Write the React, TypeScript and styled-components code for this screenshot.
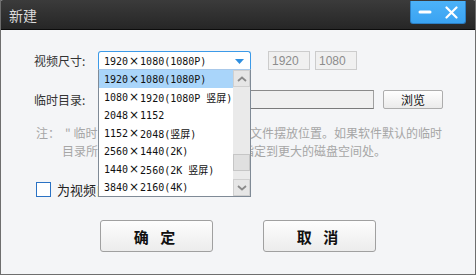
import React from 'react'
import styled, {createGlobalStyle} from 'styled-components'

const GlobalStyle = createGlobalStyle`
  html, body {
    margin: 0;
    padding: 0;
    background: #ffffff;
  }
  body {
    font-family: "Noto Sans CJK SC", "Noto Sans", sans-serif;
  }
`

const sizes = [
  '1920×1080(1080P)',
  '1080×1920(1080P 竖屏)',
  '2048×1152',
  '1152×2048(竖屏)',
  '2560×1440(2K)',
  '1440×2560(2K 竖屏)',
  '3840×2160(4K)',
]

const SizeText: React.FC<{text: string}> = ({text}) => {
  const parts = text.split('×')
  return (
    <>
      <span>{parts[0]}</span>
      <Mul>×</Mul>
      <span>{parts[1]}</span>
    </>
  )
}

const App: React.FC = () => {
  return (
    <>
      <GlobalStyle />
      <StyledWindow>
        <StyledTitleBar>
          <StyledTitle>新建</StyledTitle>
          <StyledWinButtons>
            <StyledWinButton aria-label="minimize">
              <svg width="14" height="4" viewBox="0 0 14 4">
                <rect x="0.5" y="0.5" width="13" height="3" rx="1.5" fill="#ffffff" />
              </svg>
            </StyledWinButton>
            <StyledWinButton aria-label="close">
              <svg width="13" height="13" viewBox="0 0 13 13">
                <path d="M1.5 1.5 L11.5 11.5 M11.5 1.5 L1.5 11.5" stroke="#ffffff" strokeWidth="2.2" strokeLinecap="round" />
              </svg>
            </StyledWinButton>
          </StyledWinButtons>
        </StyledTitleBar>

        <StyledBody>
          <StyledRow>
            <StyledLabel>视频尺寸:</StyledLabel>
            <StyledSelectWrap>
              <StyledSelect>
                <SizeText text={sizes[0]} />
                <StyledArrow width="9" height="5" viewBox="0 0 9 5">
                  <path d="M0 0 H9 L4.5 5 Z" fill="#2e8fe0" />
                </StyledArrow>
              </StyledSelect>
              <StyledDropList>
                <StyledItems>
                  {sizes.map((s, i) => (
                    <StyledItem key={s} active={i === 0}>
                      <SizeText text={s} />
                    </StyledItem>
                  ))}
                </StyledItems>
                <StyledScrollbar>
                  <StyledScrollButton>
                    <svg width="10" height="6" viewBox="0 0 10 6">
                      <path d="M1 5 L5 1.5 L9 5" stroke="#8a8a8a" strokeWidth="1.8" fill="none" />
                    </svg>
                  </StyledScrollButton>
                  <StyledTrack>
                    <StyledThumb />
                  </StyledTrack>
                  <StyledScrollButton>
                    <svg width="10" height="6" viewBox="0 0 10 6">
                      <path d="M1 1 L5 4.5 L9 1" stroke="#8a8a8a" strokeWidth="1.8" fill="none" />
                    </svg>
                  </StyledScrollButton>
                </StyledScrollbar>
              </StyledDropList>
            </StyledSelectWrap>
            <StyledSizeInput>1920</StyledSizeInput>
            <StyledTimes>×</StyledTimes>
            <StyledSizeInput>1080</StyledSizeInput>
          </StyledRow>

          <StyledRow gap={20}>
            <StyledLabel>临时目录:</StyledLabel>
            <StyledPathInput />
            <StyledBrowse>浏览</StyledBrowse>
          </StyledRow>

          <StyledNote>
            <StyledNoteLine>
              <StyledNoteHead>注：</StyledNoteHead>
              <Quote>"</Quote>临时目录<Quote>"</Quote>是指视频导出时的临时文件摆放位置。如果软件默认的临时
            </StyledNoteLine>
            <StyledNoteLine indent={28}>
              目录所在的磁盘空间不足，请将其指定到更大的磁盘空间处。
            </StyledNoteLine>
          </StyledNote>

          <StyledCheckRow>
            <StyledCheckbox />
            <StyledCheckLabel>为视频自动添加片头片尾</StyledCheckLabel>
          </StyledCheckRow>

          <StyledActions>
            <StyledActionButton>确 定</StyledActionButton>
            <StyledActionButton>取 消</StyledActionButton>
          </StyledActions>
        </StyledBody>
      </StyledWindow>
    </>
  )
}

const StyledWindow = styled.div`
  width: 476px;
  height: 275px;
  box-sizing: border-box;
  display: flex;
  flex-direction: column;
  background: #f4f5f7;
  border: 1px solid #6e6e6e;
  border-top: none;
  overflow: hidden;
`

const StyledTitleBar = styled.div`
  height: 30px;
  flex: none;
  box-sizing: border-box;
  display: flex;
  align-items: flex-start;
  justify-content: space-between;
  background: linear-gradient(#3b3b3b, #262626);
  border-bottom: 1px solid #0c0c0c;
  margin: 0 -1px;
  border-radius: 3px 3px 0 0;
`

const StyledTitle = styled.div`
  color: #dcdcdc;
  font-size: 14px;
  line-height: 30px;
  padding-left: 9px;
`

const StyledWinButtons = styled.div`
  display: flex;
  margin: 1px 10px 0 0;
  height: 22px;
  border: 1px solid #2c7fc4;
  border-top: none;
  border-radius: 0 0 3px 3px;
  background: linear-gradient(#4cb2f8, #3aa3f2);
  overflow: hidden;
`

const StyledWinButton = styled.div`
  width: 27px;
  display: flex;
  align-items: center;
  justify-content: center;
`

const StyledBody = styled.div`
  flex: 1;
  display: flex;
  flex-direction: column;
  padding: 21px 0 0 33px;
  color: #222222;
`

const StyledRow = styled.div<{gap?: number}>`
  display: flex;
  align-items: center;
  height: 19px;
  margin-top: ${(p) => p.gap || 0}px;
  position: relative;
  z-index: ${(p) => (p.gap ? 1 : 2)};
`

const StyledLabel = styled.div`
  width: 64px;
  font-size: 12px;
  color: #333333;
  white-space: nowrap;
`

const StyledSelectWrap = styled.div`
  position: relative;
  width: 153px;
  height: 19px;
`

const Mul = styled.span`
  width: 12px;
  height: 12px;
  display: flex;
  align-items: center;
  justify-content: center;
  margin-top: -1px;
  font-family: "DejaVu Sans", sans-serif;
  font-size: 12px;
  line-height: 12px;
`

const StyledSelect = styled.div`
  box-sizing: border-box;
  height: 19px;
  display: flex;
  align-items: center;
  padding-left: 5px;
  background: #ffffff;
  border: 1px solid #3c9ae8;
  border-bottom: none;
  border-radius: 3px 3px 0 0;
  font-family: "DejaVu Sans Mono", "Noto Sans CJK SC", monospace;
  font-size: 10px;
  color: #111111;
  white-space: nowrap;
`

const StyledArrow = styled.svg`
  margin-left: auto;
  margin-right: 6px;
`

const StyledDropList = styled.div`
  position: absolute;
  top: 18px;
  left: 0;
  width: 153px;
  height: 128px;
  box-sizing: border-box;
  display: flex;
  background: #ffffff;
  border: 1px solid #7f8a96;
  border-top-color: #a9c9ea;
`

const StyledItems = styled.div`
  flex: 1;
  display: flex;
  flex-direction: column;
`

const StyledItem = styled.div<{active?: boolean}>`
  height: 18px;
  display: flex;
  align-items: center;
  padding-left: 5px;
  background: ${(p) => (p.active ? '#a9d5fa' : 'transparent')};
  font-family: "DejaVu Sans Mono", "Noto Sans CJK SC", monospace;
  font-size: 10px;
  color: #111111;
  white-space: nowrap;
`

const StyledScrollbar = styled.div`
  width: 17px;
  display: flex;
  flex-direction: column;
  background: #eaeaea;
`

const StyledScrollButton = styled.div`
  height: 17px;
  box-sizing: border-box;
  display: flex;
  align-items: center;
  justify-content: center;
  background: #e6e6e6;
  border: 1px solid #d0d0d0;
`

const StyledTrack = styled.div`
  flex: 1;
  display: flex;
  flex-direction: column;
`

const StyledThumb = styled.div`
  margin-top: 67px;
  height: 17px;
  box-sizing: border-box;
  background: #e0e0e0;
  border: 1px solid #c6c6c6;
`

const StyledSizeInput = styled.div`
  box-sizing: border-box;
  width: 42px;
  height: 19px;
  margin-left: 17px;
  padding-left: 3px;
  display: flex;
  align-items: center;
  background: #f0f0f0;
  border: 1px solid #cccccc;
  font-family: "Liberation Sans", sans-serif;
  font-size: 12px;
  color: #8c8c8c;
`

const StyledTimes = styled.div`
  width: 22px;
  margin: 0 -17px 0 0;
  text-align: center;
  font-family: "Noto Sans CJK SC", sans-serif;
  font-size: 14px;
  color: #666666;
  & + div {
    margin-left: 0;
  }
`

const StyledPathInput = styled.div`
  box-sizing: border-box;
  width: 276px;
  height: 19px;
  background: #f0f0f0;
  border: 1px solid #7a7a7a;
  border-color: #8a8a8a #a0a0a0 #7a7a7a #8a8a8a;
`

const StyledBrowse = styled.div`
  box-sizing: border-box;
  width: 60px;
  height: 19px;
  margin-left: 9px;
  display: flex;
  align-items: center;
  justify-content: center;
  background: linear-gradient(#fefefe, #ebebeb);
  border: 1px solid #adadad;
  border-radius: 2px;
  font-size: 12px;
  color: #111111;
`

const StyledNote = styled.div`
  margin-top: 15px;
  display: flex;
  flex-direction: column;
  color: #a6a6a6;
  font-size: 12px;
`

const StyledNoteLine = styled.div<{indent?: number}>`
  height: 18px;
  line-height: 18px;
  padding-left: ${(p) => p.indent || 2}px;
  white-space: nowrap;
`

const StyledNoteHead = styled.span`
  display: inline-block;
  width: 29px;
`

const Quote = styled.span`
  display: inline-block;
  width: 8.5px;
`

const StyledCheckRow = styled.div`
  margin-top: 22px;
  display: flex;
  align-items: center;
  height: 15px;
  padding-left: 2px;
`

const StyledCheckbox = styled.div`
  width: 15px;
  height: 15px;
  box-sizing: border-box;
  background: #ffffff;
  border: 1px solid #2a72c4;
`

const StyledCheckLabel = styled.div`
  margin-left: 6px;
  font-size: 13px;
  color: #222222;
`

const StyledActions = styled.div`
  margin: 23px 0 0 -33px;
  display: flex;
  justify-content: center;
  gap: 50px;
`

const StyledActionButton = styled.div`
  box-sizing: border-box;
  width: 113px;
  height: 32px;
  display: flex;
  align-items: center;
  justify-content: center;
  background: linear-gradient(#fdfdfd, #ececec);
  border: 1px solid #a0a0a0;
  border-radius: 3px;
  font-size: 15px;
  font-weight: 700;
  letter-spacing: 4px;
  color: #111111;
  white-space: pre;
`

export default App
